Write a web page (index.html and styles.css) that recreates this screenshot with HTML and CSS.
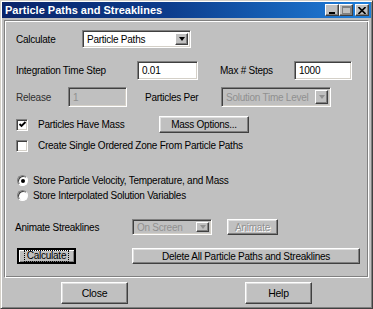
FILE: index.html
```html
<!DOCTYPE html>
<html>
	<head>
		<title>Particle Paths and Streaklines</title>
		<link rel="stylesheet" href="styles.css">
	</head>
	<body>
		<div class="window">
			<div class="titlebar">
				<span class="title">Particle Paths and Streaklines</span>
				<div class="caption-btns">
					<span class="cap-btn"><svg width="8" height="7" viewBox="0 0 8 7"><rect x="1" y="5" width="6" height="2" fill="#000"/></svg></span>
					<span class="cap-btn"><svg width="9" height="8" viewBox="0 0 9 8"><rect x="0.5" y="0.5" width="8" height="7" fill="none" stroke="#808080"/><rect x="0" y="0" width="9" height="2" fill="#808080"/></svg></span>
					<span class="cap-btn cap-close"><svg width="8" height="7" viewBox="0 0 8 7"><path d="M0.5 0 L7.5 7 M7.5 0 L0.5 7" stroke="#000" stroke-width="1.6"/></svg></span>
				</div>
			</div>

			<div class="frame">
				<div class="row row-calc">
					<span class="label lbl-calc">Calculate</span>
					<div class="combo combo-calc">
						<span class="combo-text">Particle Paths</span>
						<span class="combo-btn"><i class="arrow"></i></span>
					</div>
				</div>

				<div class="row row-step">
					<span class="label lbl-step">Integration Time Step</span>
					<div class="field field-step">0.01</div>
					<span class="label lbl-max">Max # Steps</span>
					<div class="field field-max">1000</div>
				</div>

				<div class="row row-release">
					<span class="label lbl-release">Release</span>
					<div class="field field-release disabled">1</div>
					<span class="label lbl-per">Particles Per</span>
					<div class="combo combo-per disabled">
						<span class="combo-text">Solution Time Level</span>
						<span class="combo-btn"><i class="arrow"></i></span>
					</div>
				</div>

				<div class="row row-mass">
					<span class="check checked"><svg width="9" height="9" viewBox="0 0 9 9"><polyline points="1.5,4 3.5,6 7.5,2" fill="none" stroke="#000" stroke-width="1.8"/></svg></span>
					<span class="label lbl-mass">Particles Have Mass</span>
					<span class="btn btn-mass">Mass Options...</span>
				</div>

				<div class="row row-zone">
					<span class="check"></span>
					<span class="label">Create Single Ordered Zone From Particle Paths</span>
				</div>

				<div class="row row-radio1">
					<span class="radio selected"></span>
					<span class="label">Store Particle Velocity, Temperature, and Mass</span>
				</div>
				<div class="row row-radio2">
					<span class="radio"></span>
					<span class="label">Store Interpolated Solution Variables</span>
				</div>

				<div class="row row-anim">
					<span class="label lbl-anim">Animate Streaklines</span>
					<div class="combo combo-anim disabled">
						<span class="combo-text">On Screen</span>
						<span class="combo-btn"><i class="arrow"></i></span>
					</div>
					<span class="btn btn-animate disabled">Animate</span>
				</div>

				<div class="row row-actions">
					<span class="btn btn-calc default"><span class="focus">Calculate</span></span>
					<span class="btn btn-delete">Delete All Particle Paths and Streaklines</span>
				</div>
			</div>

			<div class="footer">
				<span class="btn btn-close">Close</span>
				<span class="btn btn-help">Help</span>
			</div>
		</div>
	</body>
</html>
```

FILE: styles.css
```css
html, body {padding: 0px; margin: 0px; background: #c0c0c0;}
body {font-family: "Liberation Sans", Arial, sans-serif; font-size: 10px; letter-spacing: -0.25px; color: #000;}

.window {box-sizing: border-box; width: 373px; height: 309px; padding: 1px; background: #c0c0c0;
	border: 1px solid; border-color: #d4d0c8 #404040 #404040 #d4d0c8;
	box-shadow: inset 1px 1px #fff, inset -1px -1px #808080;}

.titlebar {display: flex; align-items: center; height: 16px; padding-left: 3px; padding-right: 2px;
	background: linear-gradient(to right, #0a246a 0%, #0c3c8c 45%, #2080dc 100%);}
.title {flex: 1; color: #fff; font-weight: bold; font-size: 11px; letter-spacing: 0px;}
.caption-btns {display: flex;}
.cap-btn {box-sizing: border-box; display: flex; align-items: center; justify-content: center; width: 14px; height: 12px;
	background: #c0c0c0; border: 1px solid; border-color: #fff #404040 #404040 #fff; box-shadow: inset -1px -1px #808080;}
.cap-close {margin-left: 2px;}

.frame {box-sizing: border-box; height: 258px; margin: 2px 2px 0px 2px; padding-top: 9px;
	border: 1px solid; border-color: #808080 #fff #fff #808080; box-shadow: inset 1px 1px #fff, inset -1px -1px #808080;}

.row {display: flex; align-items: center; padding-left: 11px;}
.label {white-space: nowrap;}

.row-calc {height: 18px;}
.lbl-calc {width: 66px;}
.row-step {height: 19px; margin-top: 13px;}
.lbl-step {width: 121px;}
.lbl-max {width: 74px; margin-left: 22px;}
.row-release {height: 20px; margin-top: 7px;}
.lbl-release {width: 52px; color: #303030;}
.lbl-per {width: 76px; margin-left: 18px;}
.row-mass {height: 17px; margin-top: 9px;}
.lbl-mass {width: 121px; margin-left: 10px;}
.row-zone {height: 13px; margin-top: 6px;}
.row-zone .label {margin-left: 10px;}
.row-radio1 {height: 13px; margin-top: 22px;}
.row-radio2 {height: 13px; margin-top: 2px;}
.row-radio1 .label, .row-radio2 .label {margin-left: 5px;}
.row-anim {height: 16px; margin-top: 17px; padding-left: 10px;}
.lbl-anim {width: 117px;}
.row-actions {height: 16px; margin-top: 13px; padding-left: 12px;}

/* sunken edit fields */
.field, .combo {box-sizing: border-box; height: 100%; background: #fff;
	border: 1px solid; border-color: #808080 #fff #fff #808080; box-shadow: inset 1px 1px #404040, inset -1px -1px #d4d0c8;}
.field {display: flex; align-items: center; padding-left: 4px;}
.field-step {width: 61px;}
.field-max {width: 58px;}
.field-release {width: 59px;}
.disabled {color: #909090;}
.field.disabled, .combo.disabled {background: #c0c0c0;}

.combo {display: flex; align-items: stretch; padding: 2px;}
.combo-text {flex: 1; display: flex; align-items: center; padding-left: 2px; white-space: nowrap; overflow: hidden;}
.combo-btn {box-sizing: border-box; width: 13px; display: flex; align-items: center; justify-content: center;
	background: #c0c0c0; border: 1px solid; border-color: #fff #404040 #404040 #fff; box-shadow: inset -1px -1px #808080;}
.arrow {width: 0; height: 0; border-left: 3.5px solid transparent; border-right: 3.5px solid transparent; border-top: 4px solid #000;}
.disabled .arrow {border-top-color: #909090;}
.combo-calc {width: 109px;}
.combo-per {width: 110px;}
.combo-anim {width: 80px;}

/* check boxes and radios */
.check {box-sizing: border-box; width: 12px; height: 12px; display: flex; align-items: center; justify-content: center; background: #fff;
	border: 1px solid; border-color: #808080 #fff #fff #808080; box-shadow: inset 1px 1px #404040, inset -1px -1px #d4d0c8;}
.radio {box-sizing: border-box; position: relative; width: 11px; height: 11px; margin-left: 1px; border-radius: 50%; background: #fff;
	border: 1px solid; border-color: #808080 #fff #fff #808080; box-shadow: inset 1px 1px #404040;}
.radio.selected::after {content: ""; position: absolute; left: 2.5px; top: 2.5px; width: 4px; height: 4px; border-radius: 50%; background: #000;}

/* raised buttons */
.btn {box-sizing: border-box; display: flex; align-items: center; justify-content: center; height: 100%; white-space: nowrap;
	background: #c0c0c0; border: 1px solid; border-color: #fff #404040 #404040 #fff; box-shadow: inset -1px -1px #808080, inset 1px 1px #dfdfdf;}
.btn.disabled {color: #909090; text-shadow: 1px 1px #fff;}
.btn-mass {width: 90px;}
.btn-animate {width: 51px; margin-left: 15px;}
.btn-calc {width: 59px; border: 2px solid #000; box-shadow: inset 1px 1px #fff, inset -1px -1px #808080;}
.focus {padding: 0px 2px; border: 1px dotted #000; line-height: 10px;}
.btn-delete {width: 228px; margin-left: 56px;}

.footer {display: flex; padding-top: 4px; padding-left: 59px;}
.btn-close, .btn-help {width: 67px; height: 22px; font-size: 10.5px;}
.btn-help {margin-left: 117px;}
```
